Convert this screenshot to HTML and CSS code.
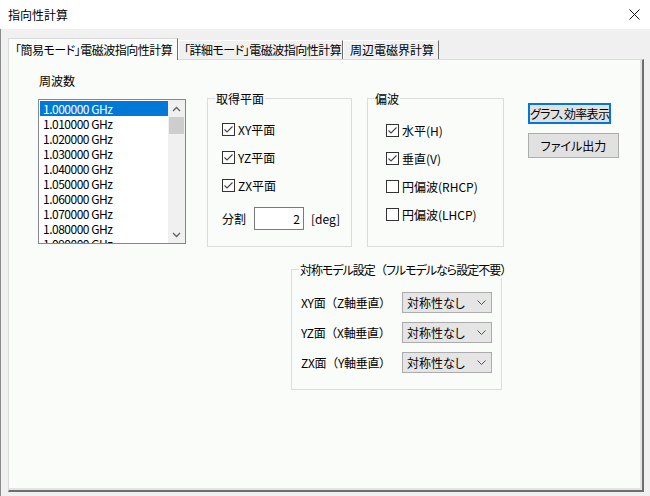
FILE: index.html
```html
<!DOCTYPE html>
<html lang="ja">
<head>
<meta charset="utf-8">
<title>指向性計算</title>
<link rel="stylesheet" href="styles.css">
</head>
<body>
<div class="window">
  <div class="titlebar">
    <span class="title">指向性計算</span>
    <svg class="close" width="11" height="11" viewBox="0 0 11 11"><path d="M0.5 0.5 L10.5 10.5 M10.5 0.5 L0.5 10.5" stroke="#111" stroke-width="1"/></svg>
  </div>
  <div class="client">
    <div class="tabs">
      <div class="tab active">「簡易モード」電磁波指向性計算</div>
      <div class="tab tab2">「詳細モード」電磁波指向性計算</div>
      <div class="tab tab3">周辺電磁界計算</div>
    </div>
    <div class="panel">
      <div class="top-row">
        <div class="freq-col">
          <div class="label">周波数</div>
          <div class="listbox">
            <div class="items">
              <div class="item selected">1.000000 GHz</div>
              <div class="item">1.010000 GHz</div>
              <div class="item">1.020000 GHz</div>
              <div class="item">1.030000 GHz</div>
              <div class="item">1.040000 GHz</div>
              <div class="item">1.050000 GHz</div>
              <div class="item">1.060000 GHz</div>
              <div class="item">1.070000 GHz</div>
              <div class="item">1.080000 GHz</div>
              <div class="item">1.090000 GHz</div>
            </div>
            <div class="scrollbar">
              <div class="sb-arrow"><svg width="9" height="6" viewBox="0 0 9 6"><path d="M1 5 L4.5 1.5 L8 5" fill="none" stroke="#606060" stroke-width="1.3"/></svg></div>
              <div class="sb-thumb"></div>
              <div class="sb-space"></div>
              <div class="sb-arrow"><svg width="9" height="6" viewBox="0 0 9 6"><path d="M1 1 L4.5 4.5 L8 1" fill="none" stroke="#606060" stroke-width="1.3"/></svg></div>
            </div>
          </div>
        </div>

        <div class="group plane">
          <span class="legend">取得平面</span>
          <div class="chk first"><span class="box checked"><svg width="11" height="11" viewBox="0 0 11 11"><path d="M1.5 5.5 L4 8 L9.5 2.5" fill="none" stroke="#444" stroke-width="1.1"/></svg></span><span>XY平面</span></div>
          <div class="chk"><span class="box checked"><svg width="11" height="11" viewBox="0 0 11 11"><path d="M1.5 5.5 L4 8 L9.5 2.5" fill="none" stroke="#444" stroke-width="1.1"/></svg></span><span>YZ平面</span></div>
          <div class="chk"><span class="box checked"><svg width="11" height="11" viewBox="0 0 11 11"><path d="M1.5 5.5 L4 8 L9.5 2.5" fill="none" stroke="#444" stroke-width="1.1"/></svg></span><span>ZX平面</span></div>
          <div class="divide">
            <span class="divide-label">分割</span>
            <span class="num-input">2</span>
            <span class="unit">[deg]</span>
          </div>
        </div>

        <div class="group pol">
          <span class="legend">偏波</span>
          <div class="chk first"><span class="box checked"><svg width="11" height="11" viewBox="0 0 11 11"><path d="M1.5 5.5 L4 8 L9.5 2.5" fill="none" stroke="#444" stroke-width="1.1"/></svg></span><span>水平(H)</span></div>
          <div class="chk"><span class="box checked"><svg width="11" height="11" viewBox="0 0 11 11"><path d="M1.5 5.5 L4 8 L9.5 2.5" fill="none" stroke="#444" stroke-width="1.1"/></svg></span><span>垂直(V)</span></div>
          <div class="chk"><span class="box"></span><span>円偏波(RHCP)</span></div>
          <div class="chk"><span class="box"></span><span>円偏波(LHCP)</span></div>
        </div>

        <div class="buttons">
          <div class="btn focused">グラフ、効率表示</div>
          <div class="btn file">ファイル出力</div>
        </div>
      </div>

      <div class="group sym">
        <span class="legend">対称モデル設定<span class="fw">（</span>フルモデルなら設定不要<span class="fw">）</span></span>
        <div class="sym-row first">
          <span class="sym-label">XY面（Z軸垂直）</span>
          <div class="combo"><span>対称性なし</span><svg width="9" height="5" viewBox="0 0 9 5"><path d="M0.5 0.5 L4.5 4.5 L8.5 0.5" fill="none" stroke="#555" stroke-width="1"/></svg></div>
        </div>
        <div class="sym-row">
          <span class="sym-label">YZ面（X軸垂直）</span>
          <div class="combo"><span>対称性なし</span><svg width="9" height="5" viewBox="0 0 9 5"><path d="M0.5 0.5 L4.5 4.5 L8.5 0.5" fill="none" stroke="#555" stroke-width="1"/></svg></div>
        </div>
        <div class="sym-row">
          <span class="sym-label">ZX面（Y軸垂直）</span>
          <div class="combo"><span>対称性なし</span><svg width="9" height="5" viewBox="0 0 9 5"><path d="M0.5 0.5 L4.5 4.5 L8.5 0.5" fill="none" stroke="#555" stroke-width="1"/></svg></div>
        </div>
      </div>
    </div>
  </div>
</div>
</body>
</html>
```

FILE: styles.css
```css
html, body {
  margin: 0;
  padding: 0;
}
body {
  width: 650px;
  height: 496px;
  overflow: hidden;
  background: #f0f0f0;
  font-family: "Noto Sans CJK JP", "Noto Sans", sans-serif;
  font-size: 12px;
  font-feature-settings: "palt" 1;
  color: #000;
}
.window {
  width: 650px;
  height: 496px;
  display: flex;
  flex-direction: column;
}
.titlebar {
  height: 29px;
  background: #ffffff;
  display: flex;
  align-items: center;
  justify-content: space-between;
  padding: 0 10px 0 8px;
  flex-shrink: 0;
}
.title {
  line-height: 16px;
}
.close {
  display: block;
}
.client {
  flex: 1;
  border-left: 1px solid #8a8a8a;
  padding: 9px 0 0 7px;
  display: flex;
  flex-direction: column;
}
.tabs {
  display: flex;
  align-items: flex-end;
  height: 21px;
  position: relative;
  z-index: 1;
}
.tab {
  box-sizing: border-box;
  height: 19px;
  border-top: 1px solid #ffffff;
  border-left: 1px solid #ffffff;
  border-right: 1px solid #6e6e6e;
  background: #f0f0f0;
  padding: 0 0 0 5px;
  line-height: 18px;
  white-space: nowrap;
  overflow: hidden;
  letter-spacing: -0.5px;
}
.tab.active {
  width: 170px;
  height: 22px;
  margin-bottom: -1px;
  padding-top: 2px;
  background: #fafcf9;
  border-top-color: #dadada;
  border-left-color: #dadada;
  padding-left: 6px;
}
.tab2 {
  width: 165px;
}
.tab3 {
  width: 96px;
  padding-left: 6px;
  letter-spacing: 0;
}
.panel {
  box-sizing: border-box;
  width: 636px;
  height: 433px;
  background: #fafcf9;
  border-top: 1px solid #dadada;
  border-left: 1px solid #dadada;
  border-right: 2px solid #6e6e6e;
  border-bottom: 2px solid #6e6e6e;
  box-shadow: inset -2px -2px 0 #e4e4e4;
  padding: 13px 0 0 29px;
}
.top-row {
  display: flex;
  align-items: flex-start;
}
.freq-col {
  width: 148px;
}
.label {
  line-height: 16px;
  padding-left: 1px;
}
.listbox {
  margin-top: 10px;
  box-sizing: border-box;
  width: 148px;
  height: 145px;
  border: 1px solid #828790;
  background: #ffffff;
  display: flex;
  overflow: hidden;
}
.items {
  flex: 1;
  padding: 1px 0 0 1px;
  overflow: hidden;
}
.item {
  height: 15px;
  line-height: 15px;
  padding-left: 3px;
  white-space: nowrap;
  letter-spacing: -0.5px;
}
.item.selected {
  background: #0078d7;
  color: #ffffff;
}
.scrollbar {
  width: 17px;
  background: #f0f0f0;
  display: flex;
  flex-direction: column;
  align-items: center;
}
.sb-arrow {
  height: 17px;
  width: 17px;
  display: flex;
  align-items: center;
  justify-content: center;
}
.sb-thumb {
  width: 15px;
  height: 17px;
  background: #cdcdcd;
}
.sb-space {
  flex: 1;
}
.group {
  box-sizing: border-box;
  border: 1px solid #dcdcdc;
  display: flex;
  flex-direction: column;
  align-items: flex-start;
}
.legend {
  margin-top: -8px;
  line-height: 16px;
  padding: 0 1px;
  background: #fafcf9;
  white-space: nowrap;
}
.plane {
  margin-left: 21px;
  margin-top: 25px;
  width: 145px;
  height: 149px;
  padding-left: 14px;
}
.plane .legend {
  margin-left: -7px;
}
.pol {
  margin-left: 15px;
  margin-top: 25px;
  width: 137px;
  height: 149px;
  padding-left: 18px;
}
.pol .legend {
  margin-left: -12px;
}
.chk {
  height: 28px;
  display: flex;
  align-items: center;
  gap: 3px;
  white-space: nowrap;
}
.plane .chk.first {
  margin-top: 8px;
}
.pol .chk.first {
  margin-top: 9px;
}
.box {
  box-sizing: border-box;
  width: 13px;
  height: 13px;
  border: 1px solid #333333;
  background: #ffffff;
  display: flex;
  align-items: center;
  justify-content: center;
}
.box svg {
  display: block;
}
.divide {
  margin-top: 8px;
  display: flex;
  align-items: center;
  height: 23px;
}
.divide-label {
  width: 32px;
}
.num-input {
  box-sizing: border-box;
  width: 50px;
  height: 23px;
  border: 1px solid #7a7a7a;
  background: #ffffff;
  text-align: right;
  padding-right: 3px;
  line-height: 21px;
}
.unit {
  margin-left: 7px;
}
.buttons {
  margin-left: 24px;
  margin-top: 30px;
  display: flex;
  flex-direction: column;
  align-items: flex-start;
}
.btn {
  box-sizing: border-box;
  background: #e1e1e1;
  border: 1px solid #adadad;
  text-align: center;
  white-space: nowrap;
}
.btn.focused {
  width: 83px;
  height: 21px;
  border: 2px solid #0078d7;
  line-height: 17px;
  letter-spacing: -0.7px;
}
.btn.file {
  margin-top: 9px;
  width: 91px;
  height: 25px;
  line-height: 23px;
}
.sym {
  margin-left: 253px;
  margin-top: 22px;
  width: 211px;
  height: 121px;
  padding-left: 9px;
}
.sym .legend {
  margin-left: -2px;
  letter-spacing: -1px;
}
.fw {
  font-feature-settings: "palt" 0;
}
.sym-row {
  display: flex;
  align-items: center;
  height: 21px;
  margin-top: 9px;
  white-space: nowrap;
}
.sym-row.first {
  margin-top: 14px;
}
.sym-label {
  width: 101px;
  font-feature-settings: "palt" 0;
  letter-spacing: -0.3px;
}
.combo {
  box-sizing: border-box;
  width: 90px;
  height: 21px;
  background: #e5e5e5;
  border: 1px solid #acacac;
  display: flex;
  align-items: center;
  justify-content: space-between;
  padding: 0 5px 0 4px;
  line-height: 19px;
}
.combo svg {
  display: block;
}
```
